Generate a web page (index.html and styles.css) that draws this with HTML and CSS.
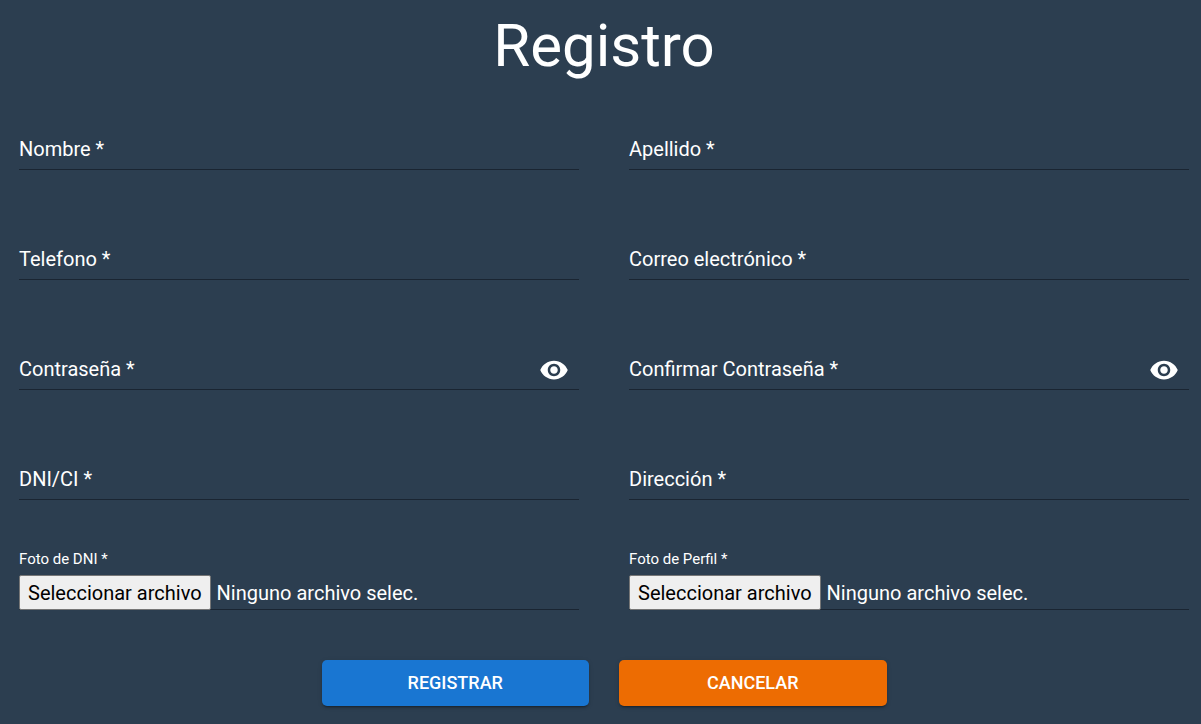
FILE: index.html
```html
<!DOCTYPE html>
<html lang="es">
<head>
  <meta charset="utf-8">
  <meta name="viewport" content="width=device-width, initial-scale=1">
  <title>Registro</title>
  <link rel="stylesheet" href="styles.css">
</head>
<body>
  <main class="page">
    <h1 class="title">Registro</h1>
    <form class="form">
      <div class="fields">
        <div class="field">
          <label class="field-label" for="nombre">Nombre *</label>
          <input class="field-input" id="nombre" type="text">
        </div>
        <div class="field">
          <label class="field-label" for="apellido">Apellido *</label>
          <input class="field-input" id="apellido" type="text">
        </div>
        <div class="field">
          <label class="field-label" for="telefono">Telefono *</label>
          <input class="field-input" id="telefono" type="tel">
        </div>
        <div class="field">
          <label class="field-label" for="correo">Correo electrónico *</label>
          <input class="field-input" id="correo" type="email">
        </div>
        <div class="field">
          <label class="field-label" for="clave">Contraseña *</label>
          <input class="field-input" id="clave" type="password">
          <button class="eye" type="button" aria-label="Mostrar contraseña">
            <svg class="eye-icon" viewBox="0 0 24 24" aria-hidden="true"><path d="M12 4.5C7 4.5 2.73 7.61 1 12c1.73 4.39 6 7.5 11 7.5s9.27-3.11 11-7.5c-1.73-4.39-6-7.5-11-7.5zM12 17c-2.76 0-5-2.24-5-5s2.24-5 5-5 5 2.24 5 5-2.24 5-5 5zm0-8c-1.66 0-3 1.34-3 3s1.34 3 3 3 3-1.34 3-3-1.34-3-3-3z"/></svg>
          </button>
        </div>
        <div class="field">
          <label class="field-label" for="clave2">Confirmar Contraseña *</label>
          <input class="field-input" id="clave2" type="password">
          <button class="eye" type="button" aria-label="Mostrar contraseña">
            <svg class="eye-icon" viewBox="0 0 24 24" aria-hidden="true"><path d="M12 4.5C7 4.5 2.73 7.61 1 12c1.73 4.39 6 7.5 11 7.5s9.27-3.11 11-7.5c-1.73-4.39-6-7.5-11-7.5zM12 17c-2.76 0-5-2.24-5-5s2.24-5 5-5 5 2.24 5 5-2.24 5-5 5zm0-8c-1.66 0-3 1.34-3 3s1.34 3 3 3 3-1.34 3-3-1.34-3-3-3z"/></svg>
          </button>
        </div>
        <div class="field">
          <label class="field-label" for="dni">DNI/CI *</label>
          <input class="field-input" id="dni" type="text">
        </div>
        <div class="field">
          <label class="field-label" for="direccion">Dirección *</label>
          <input class="field-input" id="direccion" type="text">
        </div>
        <div class="file-field">
          <label class="file-label" for="foto-dni">Foto de DNI *</label>
          <label class="file-row" for="foto-dni">
            <input class="file-input" id="foto-dni" type="file">
            <span class="file-button">Seleccionar archivo</span>
            <span class="file-name">Ninguno archivo selec.</span>
          </label>
        </div>
        <div class="file-field">
          <label class="file-label" for="foto-perfil">Foto de Perfil *</label>
          <label class="file-row" for="foto-perfil">
            <input class="file-input" id="foto-perfil" type="file">
            <span class="file-button">Seleccionar archivo</span>
            <span class="file-name">Ninguno archivo selec.</span>
          </label>
        </div>
      </div>
      <div class="actions">
        <button class="button button-primary" type="submit">REGISTRAR</button>
        <button class="button button-cancel" type="button">CANCELAR</button>
      </div>
    </form>
  </main>
</body>
</html>
```
FILE: styles.css
```css
* {
  box-sizing: border-box;
}

body {
  margin: 0;
  background: #2c3e50;
  color: #fff;
  font-family: Roboto, "Liberation Sans", sans-serif;
  font-size: 20px;
}

.page {
  padding: 11px 12px 18px 19px;
}

.title {
  margin: 0 0 29px;
  font-size: 60px;
  font-weight: 400;
  line-height: 70px;
  text-align: center;
}

.fields {
  display: grid;
  grid-template-columns: 1fr 1fr;
  gap: 50px;
}

.field {
  display: grid;
  grid-template-columns: 1fr auto;
  align-items: center;
  padding-top: 20px;
  border-bottom: 1px solid #1a2532;
}

.field-label {
  grid-area: 1 / 1;
  line-height: 39px;
  pointer-events: none;
}

.field-input {
  grid-area: 1 / 1 / 2 / 3;
  width: 100%;
  height: 39px;
  padding: 0;
  border: 0;
  outline: 0;
  background: transparent;
  color: inherit;
  font: inherit;
}

.eye {
  grid-area: 1 / 2;
  display: flex;
  padding: 0 10px;
  border: 0;
  background: transparent;
  color: #fff;
  cursor: pointer;
}

.eye-icon {
  width: 30px;
  height: 30px;
  fill: currentColor;
}

.file-field {
  display: grid;
  border-bottom: 1px solid #1a2532;
}

.file-label {
  padding-bottom: 6px;
  font-size: 15px;
  line-height: 19px;
}

.file-row {
  position: relative;
  display: flex;
  align-items: baseline;
  gap: 6px;
  cursor: pointer;
}

.file-input {
  position: absolute;
  inset: 0;
  width: 100%;
  opacity: 0;
}

.file-button {
  margin-bottom: -1px;
  padding: 2px 8px 0;
  border: 1px solid #767676;
  border-radius: 2px;
  background: #efefef;
  color: #000;
  line-height: 31px;
}

.actions {
  display: flex;
  gap: 30px;
  max-width: 565px;
  margin: 50px auto 0;
}

.button {
  flex: 1;
  padding: 8px 20px;
  border: 0;
  border-radius: 5px;
  color: #fff;
  font: inherit;
  font-size: 18px;
  font-weight: 500;
  line-height: 30px;
  box-shadow: 0 3px 1px -2px rgba(0, 0, 0, 0.2), 0 2px 2px rgba(0, 0, 0, 0.14), 0 1px 5px rgba(0, 0, 0, 0.12);
  cursor: pointer;
}

.button-primary {
  background: #1976d2;
}

.button-cancel {
  background: #ed6c02;
}
```
